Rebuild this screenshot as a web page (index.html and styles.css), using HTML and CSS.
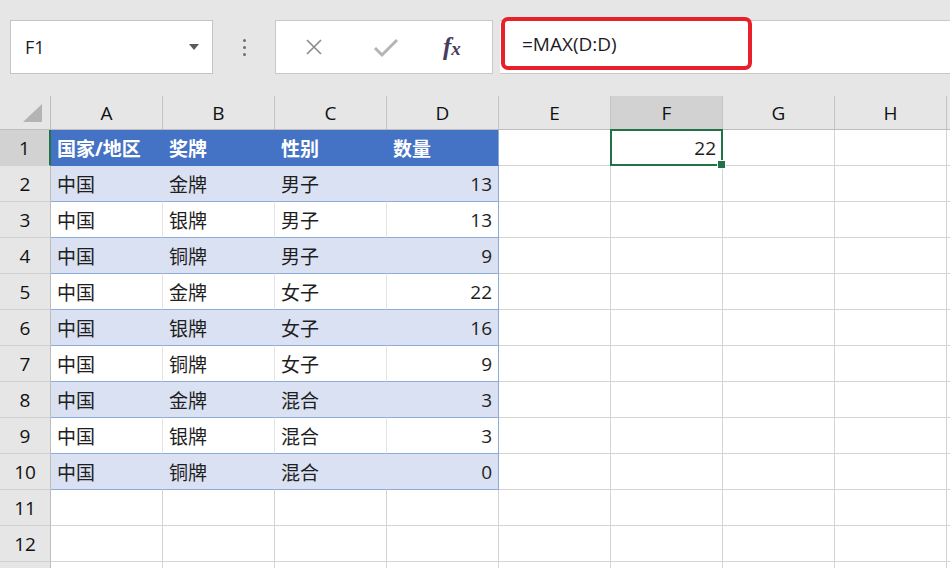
FILE: index.html
```html
<!DOCTYPE html>
<html lang="zh-CN">
  <head>
    <meta charset="UTF-8" />
    <meta name="viewport" content="width=device-width, initial-scale=1.0" />
    <title>MAX</title>
    <link rel="stylesheet" href="styles.css">
  </head>
  <body>
    <div class="topbar">
      <div class="namebox">
        <span>F1</span>
        <span class="caret"></span>
      </div>
      <div class="grip"><i></i><i></i><i></i></div>
      <div class="fx-buttons">
        <svg class="icon-x" width="20" height="20" viewBox="0 0 20 20">
          <path d="M3 3 L17 17 M17 3 L3 17" stroke="#8a8a8a" stroke-width="1.6" fill="none" />
        </svg>
        <svg class="icon-ok" width="26" height="22" viewBox="0 0 26 22">
          <path d="M2 11 L9 18 L24 3" stroke="#b4b4b4" stroke-width="3" fill="none" />
        </svg>
        <span class="fx">f<small>x</small></span>
      </div>
      <div class="formula">
        <span>=MAX(D:D)</span>
        <div class="mark"></div>
      </div>
    </div>

    <div class="sheet" id="sheet"></div>

    <script>
      var cols = ["A", "B", "C", "D", "E", "F", "G", "H"];
      var data = [
        ["国家/地区", "奖牌", "性别", "数量"],
        ["中国", "金牌", "男子", 13],
        ["中国", "银牌", "男子", 13],
        ["中国", "铜牌", "男子", 9],
        ["中国", "金牌", "女子", 22],
        ["中国", "银牌", "女子", 16],
        ["中国", "铜牌", "女子", 9],
        ["中国", "金牌", "混合", 3],
        ["中国", "银牌", "混合", 3],
        ["中国", "铜牌", "混合", 0]
      ];
      var sheet = document.getElementById("sheet");
      var html = '<div class="corner"><span></span></div>';
      cols.forEach(function (c) {
        html += '<div class="colhead' + (c == "F" ? " on" : "") + '">' + c + "</div>";
      });
      html += '<div class="colhead rest"></div>';
      for (var r = 1; r <= 13; r++) {
        // row 13 only peeks in at the bottom edge
        html += '<div class="rowhead' + (r == 1 ? " on" : "") + '">' + (r < 13 ? r : "") + "</div>";
        var row = data[r - 1];
        var kind = r == 1 ? "th" : r % 2 == 0 ? "band" : "plain";
        for (var i = 0; i < 8; i++) {
          if (row && i < 4) {
            var num = typeof row[i] == "number";
            html += '<div class="cell t ' + kind + (i == 3 ? " last" : "") + (num ? " num" : "") + '">' + row[i] + "</div>";
          } else if (r == 1 && i == 5) {
            html += '<div class="cell num sel">22<b class="handle"></b></div>';
          } else {
            html += '<div class="cell"></div>';
          }
        }
        html += '<div class="cell"></div>';
      }
      sheet.innerHTML = html;
    </script>
  </body>
</html>
```

FILE: styles.css
```css
body {
  margin: 0;
  padding: 0;
  width: 950px;
  height: 568px;
  overflow: hidden;
  background-color: #ffffff;
  font-family: "Open Sans", "Noto Sans CJK SC", sans-serif;
  color: #1e1e1e;
}
.topbar {
  height: 96px;
  box-sizing: border-box;
  padding: 20px 0 0 10px;
  background-color: #e6e6e6;
  display: flex;
  align-items: flex-start;
}
.namebox {
  width: 203px;
  height: 54px;
  box-sizing: border-box;
  background-color: #ffffff;
  border: 1px solid #c4c4c4;
  display: flex;
  align-items: center;
  justify-content: space-between;
  padding: 0 13px 0 14px;
  font-size: 18px;
  color: #221a27;
}
.caret {
  width: 0;
  height: 0;
  border-left: 5px solid transparent;
  border-right: 5px solid transparent;
  border-top: 6px solid #5a5a5a;
}
.grip {
  width: 62px;
  height: 54px;
  display: flex;
  flex-direction: column;
  align-items: center;
  justify-content: center;
  gap: 4px;
}
.grip i {
  width: 3px;
  height: 3px;
  border-radius: 50%;
  background-color: #6e6e6e;
}
.fx-buttons {
  width: 218px;
  height: 54px;
  box-sizing: border-box;
  background-color: #ffffff;
  border: 1px solid #c8c8c8;
  display: flex;
  align-items: center;
  padding: 0 0 0 28px;
}
.icon-x {
  margin-right: 49px;
}
.icon-ok {
  margin-right: 44px;
  margin-top: 2px;
}
.fx {
  font-family: "Liberation Serif", serif;
  font-style: italic;
  font-weight: bold;
  font-size: 25px;
  color: #4a3a5e;
}
.fx small {
  font-size: 19px;
}
.formula {
  position: relative;
  flex: 1;
  margin-left: 7px;
  height: 54px;
  box-sizing: border-box;
  background-color: #ffffff;
  border-top: 1px solid #c8c8c8;
  border-bottom: 1px solid #c8c8c8;
  display: flex;
  align-items: center;
  padding-left: 22px;
  padding-bottom: 6px;
  font-size: 19px;
  color: #221a27;
}
.mark {
  position: absolute;
  left: 1px;
  top: -4px;
  width: 251px;
  height: 53px;
  box-sizing: border-box;
  border: 4px solid #e8202a;
  border-radius: 7px;
}
.sheet {
  display: grid;
  grid-template-columns: 51px repeat(8, 112px) 1fr;
  grid-template-rows: 34px;
  grid-auto-rows: 36px;
}
.corner {
  background-color: #e6e6e6;
  border-right: 1px solid #bdbdbd;
  border-bottom: 1px solid #bdbdbd;
  position: relative;
}
.corner span {
  position: absolute;
  right: 8px;
  bottom: 7px;
  width: 0;
  height: 0;
  border-left: 19px solid transparent;
  border-bottom: 18px solid #b4b4b4;
}
.colhead {
  background-color: #e6e6e6;
  border-right: 1px solid #c4c4c4;
  border-bottom: 1px solid #bdbdbd;
  display: flex;
  align-items: center;
  justify-content: center;
  font-size: 19px;
  color: #111111;
}
.colhead.on {
  background-color: #d2d2d2;
}
.colhead.rest {
  border-right: none;
}
.rowhead {
  background-color: #e6e6e6;
  border-right: 1px solid #bdbdbd;
  border-bottom: 1px solid #d0d0d0;
  display: flex;
  align-items: center;
  justify-content: center;
  font-size: 19px;
  color: #111111;
}
.rowhead.on {
  background-color: #d2d2d2;
  border-right: 2px solid #217346;
}
.cell {
  box-sizing: border-box;
  border-right: 1px solid #d4d4d4;
  border-bottom: 1px solid #d4d4d4;
  display: flex;
  align-items: center;
  padding: 0 6px;
  font-size: 19px;
  white-space: nowrap;
}
.cell.num {
  justify-content: flex-end;
}
.cell.t {
  border-bottom-color: #8eaadb;
}
.cell.th {
  background-color: #4472c4;
  border-right-color: #4472c4;
  border-bottom-color: #4472c4;
  color: #ffffff;
  font-weight: bold;
}
.cell.band {
  background-color: #d9e1f2;
  border-right-color: #d9e1f2;
}
.cell.plain {
  border-right-color: #e4e4e4;
}
.cell.last {
  border-right-color: #8eaadb;
}
.cell.sel {
  position: relative;
  border: 2px solid #217346;
  margin: -1px 0 0 -1px;
  padding-right: 5px;
}
.handle {
  position: absolute;
  right: -5px;
  bottom: -5px;
  width: 7px;
  height: 7px;
  background-color: #217346;
  border: 1px solid #ffffff;
}
```
